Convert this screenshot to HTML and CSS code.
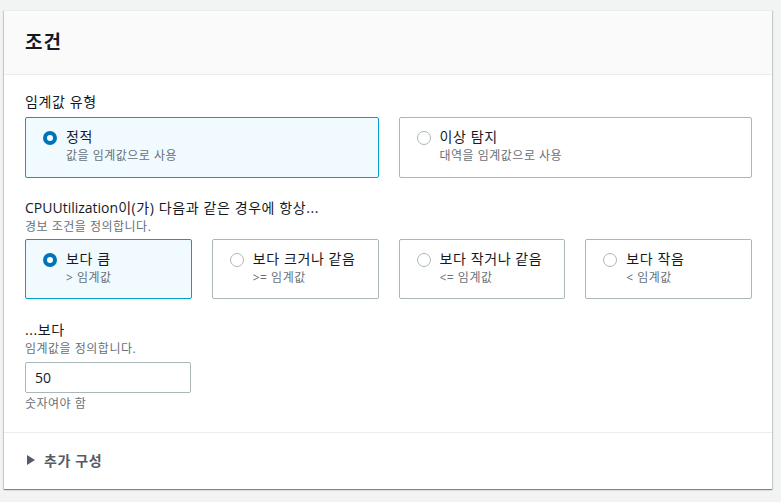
FILE: index.html
```html
<!DOCTYPE html>
<html lang="ko">
<head>
<meta charset="utf-8">
<link rel="stylesheet" href="styles.css">
</head>
<body>
<div class="card">
  <div class="card-header"><h2 class="title">조건</h2></div>
  <div class="card-body">
    <div class="field">
      <div class="label">임계값 유형</div>
      <div class="tiles two">
        <div class="tile selected">
          <span class="radio on"></span>
          <div class="tile-text"><div class="tile-title">정적</div><div class="tile-sub">값을 임계값으로 사용</div></div>
        </div>
        <div class="tile">
          <span class="radio"></span>
          <div class="tile-text"><div class="tile-title">이상 탐지</div><div class="tile-sub">대역을 임계값으로 사용</div></div>
        </div>
      </div>
    </div>
    <div class="field cond">
      <div class="label"><span class="latin">CPUUtilization</span>이(가) 다음과 같은 경우에 항상...</div>
      <div class="desc">경보 조건을 정의합니다.</div>
      <div class="tiles four">
        <div class="tile selected">
          <span class="radio on"></span>
          <div class="tile-text"><div class="tile-title">보다 큼</div><div class="tile-sub">&gt; 임계값</div></div>
        </div>
        <div class="tile">
          <span class="radio"></span>
          <div class="tile-text"><div class="tile-title">보다 크거나 같음</div><div class="tile-sub">&gt;= 임계값</div></div>
        </div>
        <div class="tile">
          <span class="radio"></span>
          <div class="tile-text"><div class="tile-title">보다 작거나 같음</div><div class="tile-sub">&lt;= 임계값</div></div>
        </div>
        <div class="tile">
          <span class="radio"></span>
          <div class="tile-text"><div class="tile-title">보다 작음</div><div class="tile-sub">&lt; 임계값</div></div>
        </div>
      </div>
    </div>
    <div class="field last">
      <div class="label">...보다</div>
      <div class="desc">임계값을 정의합니다.</div>
      <div class="input">50</div>
      <div class="hint">숫자여야 함</div>
    </div>
  </div>
  <div class="card-footer">
    <span class="caret"></span><span class="expander">추가 구성</span>
  </div>
</div>
</body>
</html>
```

FILE: styles.css
```css
html, body { margin: 0; padding: 0; }
body {
  background: #f2f3f3;
  font-family: "Open Sans", "Noto Sans CJK KR", sans-serif;
  color: #16191f;
  font-size: 14px;
  padding: 10px 9px 12px 4px;
}
.card {
  background: #fff;
  border-top: 1px solid #eaeded;
  box-shadow: 0 1px 1px 0 rgba(0,28,36,.3), 1px 1px 1px 0 rgba(0,28,36,.15), -1px 1px 1px 0 rgba(0,28,36,.15);
}
.card-header {
  background: #fafafa;
  border-bottom: 1px solid #eaeded;
  height: 63px;
  display: flex;
  align-items: center;
  padding: 0 21px;
}
.title {
  margin: 0;
  font-size: 19px;
  letter-spacing: 1px;
  font-weight: 700;
  line-height: 22px;
  padding-bottom: 2px;
}
.card-body {
  padding: 16px 20px 20px 21px;
  border-bottom: 1px solid #eaeded;
}
.field { margin-bottom: 19px; }
.field.cond { margin-bottom: 20px; }
.field.cond .desc { margin-bottom: 4px; }
.field.last { margin-bottom: 0; }
.label { line-height: 22px; font-size: 14px; letter-spacing: 0.6px; }
.latin { letter-spacing: 0; }
.desc { font-size: 12px; line-height: 16px; color: #687078; margin-bottom: 5px; letter-spacing: 0.5px; }
.field > .label + .tiles { margin-top: 4px; }
.tiles { display: grid; gap: 20px; }
.tiles.two { grid-template-columns: 1fr 1fr; }
.tiles.four { grid-template-columns: repeat(4, 1fr); }
.tile {
  border: 1px solid #aab7b8;
  border-radius: 2px;
  display: flex;
  align-items: flex-start;
  padding: 9px 16px 13px 17px;
  min-height: 36px;
}
.four .tile { padding-bottom: 12px; }
.tile.selected { border-color: #00a1c9; background: #f1faff; }
.radio {
  border: 1px solid #aab7b8;
  border-radius: 50%;
  background: #fff;
  flex: none;
  margin-top: 4px;
  margin-right: 9px;
  box-sizing: content-box;
  width: 12px; height: 12px;
}
.radio.on { border: 4px solid #0073bb; width: 6px; height: 6px; }
.tile-title { line-height: 20px; font-size: 14px; letter-spacing: 0.6px; }
.tile-sub { font-size: 12px; line-height: 16px; color: #687078; margin-top: 1px; letter-spacing: 0.5px; }
.input {
  width: 155px;
  height: 29px;
  border: 1px solid #aab7b8;
  border-radius: 2px;
  padding-left: 9px;
  line-height: 29px;
  font-size: 14px;
}
.hint { font-size: 12px; line-height: 16px; color: #687078; margin-top: 3px; letter-spacing: 0.5px; }
.card-footer {
  height: 56px;
  display: flex;
  align-items: center;
  padding: 0 21px 3px 23px;
  box-sizing: border-box;
}
.caret {
  width: 0; height: 0;
  border-left: 8px solid #545b64;
  border-top: 5px solid transparent;
  border-bottom: 5px solid transparent;
  margin-right: 9px;
}
.expander { font-size: 14px; font-weight: 700; color: #545b64; letter-spacing: 0.6px; }
```
